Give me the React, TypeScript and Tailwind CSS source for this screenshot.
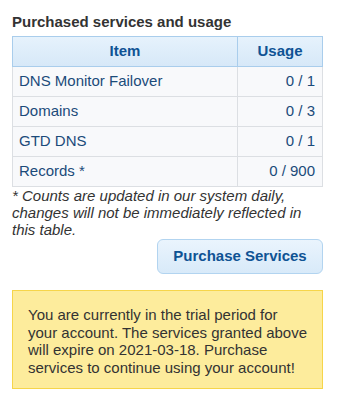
import React from 'react';

const rows = [
    { item: 'DNS Monitor Failover', usage: '0 / 1' },
    { item: 'Domains', usage: '0 / 3' },
    { item: 'GTD DNS', usage: '0 / 1' },
    { item: 'Records *', usage: '0 / 900' },
];

const App: React.FC = () => {
    return (
        <div className="bg-white min-h-[396px] pl-3 pr-6 pt-[13px] text-[15px] text-[#333] font-['Liberation_Sans',Arial,sans-serif]">
            <h2 className="font-bold leading-[17px] mb-[6px]">Purchased services and usage</h2>

            {/* usage table */}
            <table className="w-full border-collapse">
                <thead>
                    <tr className="bg-gradient-to-b from-[#e6f2fc] to-[#d6e8f8] text-[#0f5394]">
                        <th className="h-[30px] border border-[#a9cdec] font-bold text-center">Item</th>
                        <th className="h-[30px] w-[85px] border border-[#a9cdec] font-bold text-center">Usage</th>
                    </tr>
                </thead>
                <tbody>
                    {rows.map((r) => (
                        <tr key={r.item} className="bg-[#f8f9fb] text-[#1b4b7a]">
                            <td className="h-[30px] border border-[#dcdfe3] pl-[6px]">{r.item}</td>
                            <td className="h-[30px] border border-[#dcdfe3] pr-[7px] text-right">{r.usage}</td>
                        </tr>
                    ))}
                </tbody>
            </table>

            <p className="italic leading-[17px]">
                * Counts are updated in our system daily, changes will not be immediately reflected in this table.
            </p>

            <div className="flex justify-end mt-[1px]">
                <button className="h-[35px] w-[166px] rounded-[6px] border border-[#b2d4f0] bg-gradient-to-b from-[#eaf4fd] to-[#d8eaf9] text-[#0f5394] font-bold">
                    Purchase Services
                </button>
            </div>

            {/* trial notice */}
            <div className="mt-4 h-[99px] border border-[#f6d54a] bg-[#fdec9c] pl-[15px] pr-[12px] pt-[15px] leading-[17.5px]">
                You are currently in the trial period for your account. The services granted above will expire on 2021-03-18. Purchase services to continue using your account!
            </div>
        </div>
    );
};

export default App;
